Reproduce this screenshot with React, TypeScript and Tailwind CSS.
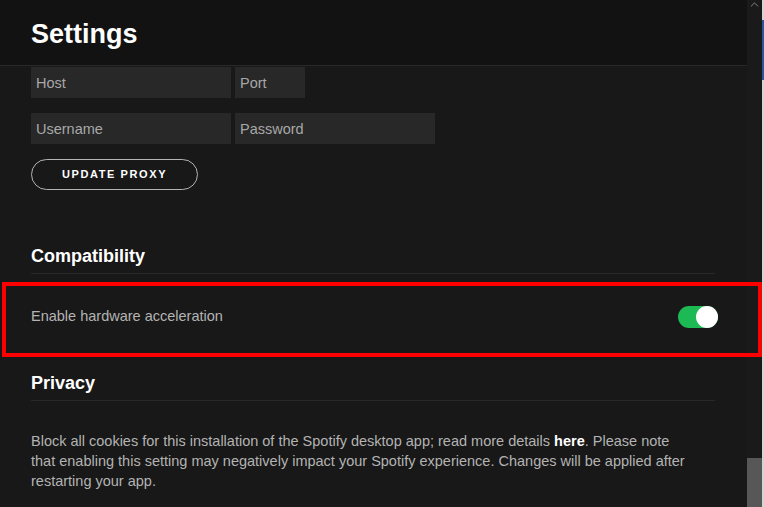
import { ChevronUp } from "lucide-react";

const font = { fontFamily: "'Liberation Sans', Arial, sans-serif" };

const Field = ({ placeholder, width }: { placeholder: string; width: string }) => (
  <input
    placeholder={placeholder}
    className={`${width} h-[31px] bg-[#282828] px-[5px] text-[14.5px] text-white placeholder:text-[#a7a7a7] outline-none`}
  />
);

const SectionTitle = ({ children, className }: { children: string; className?: string }) => (
  <div className={`border-b border-[#282828] pb-[5px] ${className ?? ""}`}>
    <h2 className="text-[18px] leading-[24px] font-bold text-white">{children}</h2>
  </div>
);

export default function App() {
  return (
    <div
      className="relative flex w-[764px] h-[507px] overflow-hidden bg-[#181818]"
      style={font}
    >
      {/* main window */}
      <div className="flex w-[747px] flex-col">
        <header className="flex h-[66px] shrink-0 items-center border-b border-[#282828] bg-[#121212] px-[31px]">
          <h1 className="pt-[3px] text-[27px] font-bold text-white">Settings</h1>
        </header>

        <div className="flex flex-col pl-[31px] pr-[32px]">
          <div className="mt-[1px] flex gap-[4px]">
            <Field placeholder="Host" width="w-[200px]" />
            <Field placeholder="Port" width="w-[70px]" />
          </div>
          <div className="mt-[15px] flex gap-[4px]">
            <Field placeholder="Username" width="w-[200px]" />
            <Field placeholder="Password" width="w-[200px]" />
          </div>
          <button className="mt-[15px] h-[31px] w-[167px] rounded-full border border-[#b3b3b3] text-[11px] font-bold tracking-[1.6px] text-white">
            UPDATE PROXY
          </button>

          <SectionTitle className="mt-[54px]">Compatibility</SectionTitle>

          <div className="flex h-[82px] items-center justify-between pt-[3px]">
            <span className="text-[14.5px] text-[#b3b3b3]">Enable hardware acceleration</span>
            <div className="-mr-[3px] flex h-[22px] w-[40px] items-center justify-end rounded-full bg-[#1db954]">
              <div className="h-[22px] w-[22px] rounded-full bg-white" />
            </div>
          </div>

          <SectionTitle className="mt-[15px]">Privacy</SectionTitle>

          <p className="mt-[30px] w-[660px] text-[14.5px] leading-[20px] text-[#b3b3b3]">
            Block all cookies for this installation of the Spotify desktop app; read more details{" "}
            <b className="text-white">here</b>. Please note that enabling this setting may negatively
            impact your Spotify experience. Changes will be applied after restarting your app.
          </p>
        </div>
      </div>

      {/* scrollbar */}
      <div className="relative w-[15px] bg-[#1a1a1a]">
        <ChevronUp size={13} strokeWidth={1.5} className="absolute left-[1px] top-[-2px] text-[#9a9a9a]" />
        <div className="absolute bottom-0 left-0 h-[49px] w-[15px] bg-[#575757]" />
      </div>

      {/* window behind */}
      <div className="flex w-[2px] flex-col bg-[#d4d4d4]">
        <div className="mt-[20px] h-[60px] bg-[#2b5797]" />
      </div>

      {/* annotation box */}
      <div className="pointer-events-none absolute left-[2px] top-[282px] h-[75px] w-[760px] border-4 border-[#ff0000]" />
    </div>
  );
}
